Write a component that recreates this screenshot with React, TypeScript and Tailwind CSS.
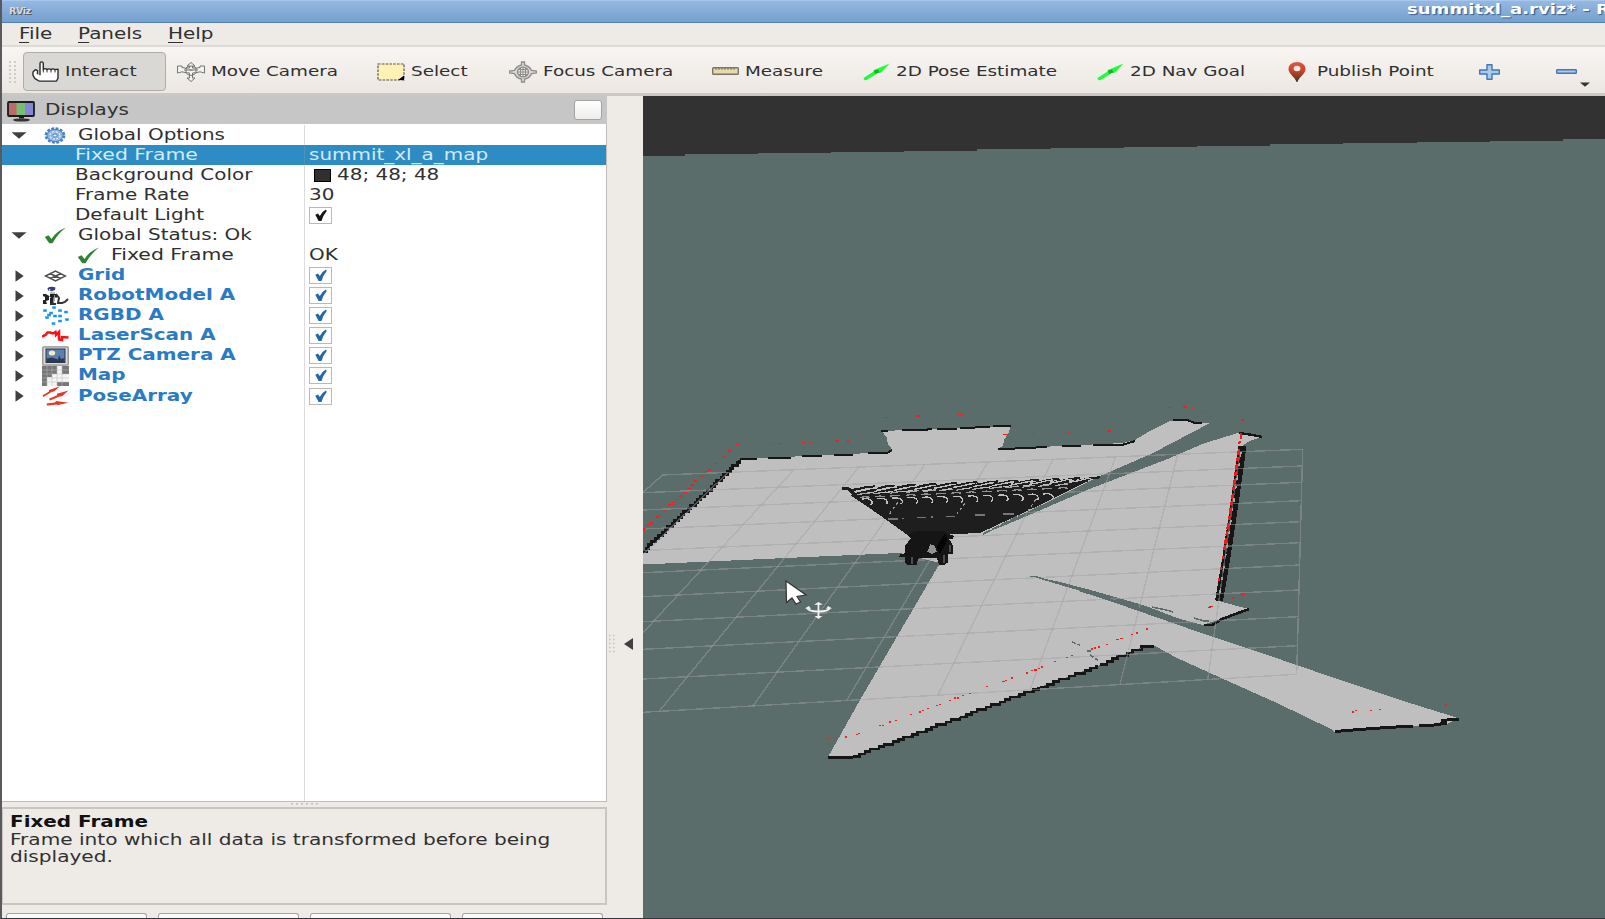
import React from "react";

type Kids = { children: React.ReactNode };

const Wide = ({ children, className = "", scale = "scale-x-[1.33]" }: Kids & { className?: string; scale?: string }) => (
  <span className={`inline-block origin-left whitespace-pre ${scale} ${className}`}>{children}</span>
);

/* ---------- toolbar icons ---------- */

const HandIcon = () => (
  <svg width="27" height="21" viewBox="0 0 27 22" preserveAspectRatio="none" fill="#fff" stroke="#2a2a2a" strokeWidth="1.400" strokeLinejoin="round">
    <path d="M8 15 V3 Q8 1 9.500 1 Q11.300 1 11.300 3 V9 Q13 7 15 9 Q17 7.500 19 9 Q21 7.500 23 9 L26 8.500 V18 L24.500 21 H7 L3 18.500 L1 15 V11.500 L3.500 9 L5.500 10 V14" />
    <path d="M11.300 9 V12 M15 9 V12 M19 9 V12 M23 9 V12" fill="none" strokeWidth="1" />
  </svg>
);

const MoveIcon = () => (
  <svg width="28" height="20" viewBox="0 0 28 20" fill="#f4f2f0" stroke="#757573" strokeWidth="1">
    <path d="M14 .5 L18 4 H15.500 V6 Q20 6.500 23 5.500 V4 L27.500 4 V11 L23 9.800 Q19 11 15.500 11 V16 H18 L14 19.500 L10 16 H12.500 V11 Q9 11 5 9.800 L.5 11 V4 H5 V5.500 Q8 6.500 12.500 6 V4 H10 Z" />
    <path d="M9 6 Q14 2 19 6 M8 10 Q14 17 20 10 M9 6 V10 M19 6 V10 M12.500 8 H15.500 M7 8 H21" fill="none" />
  </svg>
);

const SelectIcon = () => (
  <svg width="28" height="18" viewBox="0 0 28 18">
    <rect x="1" y="1" width="26" height="16" fill="#fff2b4" stroke="#555" strokeWidth="1.200" strokeDasharray="2.600 1.200" />
    <path d="M27 12.500 V17 H21 Z" fill="#000" />
  </svg>
);

const FocusIcon = () => (
  <svg width="28" height="22" viewBox="0 0 28 22" fill="none" stroke="#8c8c8a" strokeWidth="1.300">
    <path d="M12.500 1 H15.500 V4 Q21 5.500 22.500 9.500 L27.500 10 V12 L22.500 12.500 Q21 17 15.500 18 V21 H12.500 V18 Q7 17 5.500 12.500 L.5 12 V10 L5.500 9.500 Q7 5.500 12.500 4 Z" fill="#dcdbd9" />
    <ellipse cx="14" cy="11" rx="5.500" ry="4.800" fill="#eceae8" />
    <path d="M8 11 H20 M14 6 V16 M10 8.500 H18 M10 13.500 H18 M11.500 7 V15 M16.500 7 V15" strokeWidth="1" />
  </svg>
);

const RulerIcon = () => (
  <svg width="27" height="8" viewBox="0 0 27 8">
    <rect x=".7" y=".7" width="25.600" height="6.600" rx=".8" fill="#e4dca6" stroke="#77756e" strokeWidth="1.400" />
    <path d="M4 1 V3 M7 1 V3 M10 1 V3 M13 1 V3 M16 1 V3 M19 1 V3 M22 1 V3" stroke="#77756e" strokeWidth="1" />
  </svg>
);

const ArrowIcon = () => (
  <svg width="27" height="18" viewBox="0 0 27 18">
    <path d="M.5 15 L11 8.300 L11 7 L26.500 .5 L18 9.500 L15 10 L3.500 17 Q1 17.800 .5 15" fill="#1bff35" />
    <path d="M10.500 7.500 L15 6.500 L16.500 9.500 L12 10.800 Z" fill="#12b52a" />
  </svg>
);

const PinIcon = () => (
  <svg width="18" height="20" viewBox="0 0 18 20">
    <defs>
      <linearGradient id="pin" x1="0" y1="0" x2="0" y2="1">
        <stop offset="0" stopColor="#e2563f" />
        <stop offset=".45" stopColor="#c8432c" />
        <stop offset="1" stopColor="#3c3a1c" />
      </linearGradient>
    </defs>
    <path d="M9 0 C14 0 17.500 3 17.500 7 C17.500 12 11 15 9.500 20 H8.500 C7 15 .5 12 .5 7 C.5 3 4 0 9 0" fill="url(#pin)" />
    <ellipse cx="9" cy="6.500" rx="3.400" ry="2.700" fill="#f7e9e5" />
  </svg>
);

const PlusIcon = () => (
  <svg width="21" height="16" viewBox="0 0 21 16">
    <path d="M8 .7 H13 V6 H20.300 V10 H13 V15.300 H8 V10 H.7 V6 H8 Z" fill="#a9cbea" stroke="#4276b4" strokeWidth="1.400" strokeLinejoin="round" />
  </svg>
);

const MinusIcon = () => (
  <svg width="21" height="5" viewBox="0 0 21 5">
    <rect x=".7" y=".7" width="19.600" height="3.600" rx=".6" fill="#a9cbea" stroke="#4276b4" strokeWidth="1.400" />
  </svg>
);

/* ---------- tree icons ---------- */

const GearIcon = () => (
  <svg width="22" height="17" viewBox="0 0 22 17" fill="none">
    <ellipse cx="11" cy="8.500" rx="9.200" ry="7" stroke="#4a80c0" strokeWidth="2.400" strokeDasharray="2.800 1.500" />
    <ellipse cx="11" cy="8.500" rx="8" ry="6.200" fill="#8fb4de" stroke="#4a80c0" strokeWidth="1" />
    <ellipse cx="11" cy="8.500" rx="5" ry="3.800" stroke="#dce9f6" strokeWidth="1.400" strokeDasharray="2 1.500" />
    <ellipse cx="11" cy="8.500" rx="2" ry="1.500" fill="#eef5fc" stroke="#4a80c0" strokeWidth=".9" />
  </svg>
);

const CheckIcon = () => (
  <svg width="23" height="17" viewBox="0 0 23 17">
    <path d="M.8 10 L4.500 8.300 L7.500 12 Q12 4.500 22 .6 Q14 6.500 8.500 16.200 H5.300 Z" fill="#2a8530" />
  </svg>
);

const GridIcon = () => (
  <svg width="23" height="12" viewBox="0 0 23 12" fill="none" stroke="#505050" strokeWidth="1.500">
    <path d="M1.500 6 L11.500 1 L21.500 6 L11.500 11 Z M6 3.500 L17 8.700 M17 3.500 L6 8.700" />
  </svg>
);

const RobotIcon = () => (
  <svg width="27" height="20" viewBox="0 0 27 20">
    <path d="M5.500 2 Q9 0 13.500 1.500 L13 4 L9.500 5.200 L6 4.500 Z" fill="#3a3a86" />
    <path d="M7 3 L9 4 L7 5 Z" fill="#fff" />
    <path d="M8 6 H13 V8 H8 Z" fill="#bbb" />
    <path d="M1 8 H4 L7 10 V14 L4 15 L5 18 H1 V14 H3 V11 L1 10 Z M8 8 H15 V11.500 H11.500 V17 L13 19 H8 Z" fill="#222" />
    <path d="M14 8 L17 12 L16 17 H20 L23 16 L26 13 M8 17.500 L14 18" fill="none" stroke="#333" strokeWidth="2" />
    <path d="M6 9 L9 12 M12.500 9 V15" stroke="#999" strokeWidth="1" />
  </svg>
);

const CLOUD = [[12, 1.500], [3, 4.500], [9, 7], [18, 4.500], [24, 6], [7, 9], [5, 11.500], [13, 10], [18, 10], [18, 15], [25, 13.500], [11.500, 17.500]];
const CloudIcon = () => (
  <svg width="27" height="20" viewBox="0 0 27 20">
    {CLOUD.map(([x, y], i) => <rect key={i} x={x - 1.8} y={y - 1.2} width="3.600" height="2.500" fill="#1793f3" />)}
  </svg>
);

const ScanIcon = () => (
  <svg width="27" height="13" viewBox="0 0 27 13">
    <path d="M0 7.500 L3.500 6 L5.500 3.500 H8 L11 4.500 L13.500 3 L14 6 L17 3 V10.500 L20 11 V8 L26.500 8.500" fill="none" stroke="#fa1010" strokeWidth="2.500" />
  </svg>
);

const PhotoIcon = () => (
  <svg width="27" height="20" viewBox="0 0 27 20">
    <rect x=".8" y=".8" width="25.400" height="18.400" rx="1" fill="#d9d9d5" stroke="#8d8d89" strokeWidth="1.300" />
    <rect x="4" y="3" width="19" height="13.500" fill="#5f7fae" stroke="#29364f" strokeWidth="1" />
    <path d="M4.500 12.500 L10 11.500 L16 13.500 L17 9 L19 13 L22.500 12 V16 H4.500 Z" fill="#2b3a57" />
    <ellipse cx="10" cy="7" rx="3.200" ry="2.500" fill="#ecefbf" />
  </svg>
);

const MapIcon = () => (
  <svg width="27" height="20" viewBox="0 0 27 20">
    <rect width="27" height="20" fill="#f5f5f5" />
    <path d="M0 0 H15 V8 H10 V11 H5 V20 H0 Z M20 0 H27 V8 H20 Z M15 16 H27 V20 H15 Z" fill="#777" />
    <path d="M0 4 H27 M0 8 H27 M0 12 H27 M0 16 H27 M5 0 V20 M10 0 V20 M15 0 V20 M20 0 V20" stroke="#bbb" strokeWidth=".5" />
  </svg>
);

const PosesIcon = () => (
  <svg width="27" height="20" viewBox="0 0 27 20">
    <path d="M.5 9.500 L7 5.500 L7 4 L18 .3 L12 5.500 L9.500 6 L1.500 11 Z M7 12.700 L15 9.300 L15 7.800 L26.500 4.500 L20 10.300 L17.500 10.500 L8 14.500 Z M4.500 17.500 L13 16.500 L14 15 L26.500 16.800 L15 19.300 V18.500 L5 19.500 Z" fill="#ee3322" />
  </svg>
);

const MonitorIcon = () => (
  <svg width="28" height="21" viewBox="0 0 28 21">
    <rect x="1" y="1" width="26" height="14" rx="1" fill="#b66" stroke="#1c1c1c" strokeWidth="1.800" />
    <rect x="2" y="2" width="7.500" height="12" fill="#bd6a6a" />
    <rect x="9.500" y="2" width="9" height="12" fill="#76bd76" />
    <rect x="18.500" y="2" width="7.500" height="12" fill="#8686d2" />
    <path d="M12 15.500 H17 V17.500 H12 Z" fill="#1c1c1c" />
    <ellipse cx="14.500" cy="19" rx="8.500" ry="1.600" fill="#333" />
  </svg>
);

/* ---------- display tree ---------- */

type Value = { text?: string; swatch?: boolean; check?: "black" | "blue" };
type Row = {
  label: string;
  open?: boolean;
  closed?: boolean;
  icon?: React.ReactNode;
  level?: 1 | 2;
  plugin?: boolean;
  selected?: boolean;
  value?: Value;
};

const ROWS: Row[] = [
  { label: "Global Options", open: true, icon: <GearIcon /> },
  { label: "Fixed Frame", level: 1, selected: true, value: { text: "summit_xl_a_map" } },
  { label: "Background Color", level: 1, value: { text: "48; 48; 48", swatch: true } },
  { label: "Frame Rate", level: 1, value: { text: "30" } },
  { label: "Default Light", level: 1, value: { check: "black" } },
  { label: "Global Status: Ok", open: true, icon: <CheckIcon /> },
  { label: "Fixed Frame", level: 2, icon: <CheckIcon />, value: { text: "OK" } },
  { label: "Grid", closed: true, plugin: true, icon: <GridIcon />, value: { check: "blue" } },
  { label: "RobotModel A", closed: true, plugin: true, icon: <RobotIcon />, value: { check: "blue" } },
  { label: "RGBD A", closed: true, plugin: true, icon: <CloudIcon />, value: { check: "blue" } },
  { label: "LaserScan A", closed: true, plugin: true, icon: <ScanIcon />, value: { check: "blue" } },
  { label: "PTZ Camera A", closed: true, plugin: true, icon: <PhotoIcon />, value: { check: "blue" } },
  { label: "Map", closed: true, plugin: true, icon: <MapIcon />, value: { check: "blue" } },
  { label: "PoseArray", closed: true, plugin: true, icon: <PosesIcon />, value: { check: "blue" } },
];

const CheckBox = ({ color }: { color: "black" | "blue" }) => (
  <span className="flex h-[17px] w-[23px] items-center justify-center border border-[#bcb8b4] bg-white">
    <svg width="12" height="13" viewBox="0 0 12 13">
      <path d="M.3 5.800 L3 4.500 L4.800 7 Q7 2.500 11 .5 L11.700 2 Q8 6.500 6.500 12 H3.600 Z" fill={color === "black" ? "#141414" : "#2468a8"} />
    </svg>
  </span>
);

const TreeRow = ({ row }: { row: Row }) => (
  <div className={`flex h-[20.080px] shrink-0 items-center ${row.selected ? "bg-[#2d8cc4] text-[#d3eaf8]" : "text-[#303030]"}`}>
    <div className={`flex h-full w-[303px] shrink-0 items-center border-r ${row.selected ? "border-[#4f8fb8]" : "border-[#dcdcdc]"}`}>
      <span className="flex w-[36px] shrink-0 justify-center pr-[2px]">
        {row.open && <svg width="16" height="7" viewBox="0 0 16 7"><path d="M.5 .3 H15.500 L8 6.800 Z" fill="#404040" /></svg>}
        {row.closed && <svg width="9" height="12" viewBox="0 0 9 12"><path d="M.5 .3 L8.700 6 L.5 11.700 Z" fill="#404040" /></svg>}
      </span>
      {row.level === 1 && <span className="w-[37px] shrink-0" />}
      {row.level !== 1 && (
        <span className={`flex w-[34px] shrink-0 items-center justify-center ${row.level === 2 ? "ml-[33px]" : ""}`}>{row.icon}</span>
      )}
      <Wide
        scale={row.label === "Fixed Frame" ? "scale-x-[1.36]" : "scale-x-[1.33]"}
        className={row.plugin ? "ml-[6px] font-bold text-[#2a7ac4]" : row.level === 1 ? "ml-0" : "ml-[6px]"}
      >
        {row.label}
      </Wide>
    </div>
    <div className="flex items-center pl-[4px]">
      {row.value?.swatch && <span className="mr-[6px] ml-[5px] h-[13px] w-[17px] border border-black bg-[#303030]" />}
      {row.value?.text && <Wide>{row.value.text}</Wide>}
      {row.value?.check && <CheckBox color={row.value.check} />}
    </div>
  </div>
);

/* ---------- 3D scene ---------- */

const range = (n: number) => Array.from({ length: n }, (_, i) => i);

const ROW_LEFT = [475.8, 492.7, 510, 529, 550.5, 572.7, 596.7, 621.7, 649.3, 679, 712.3];
const ROW_RIGHT = [449.3, 466, 482.3, 500.7, 521.7, 542.7, 565, 590, 616.7, 645.7, 674.3];
const COL_TOP = [662.7, 728, 794, 859, 925, 988, 1053, 1115.7, 1177.7, 1240, 1302.7];
const COL_BOTTOM = [375, 470, 565, 659, 753, 846.7, 938, 1030, 1120, 1207.7, 1296.7];

const GridLines = () => (
  <g stroke="#a0a0a4" strokeOpacity=".45" strokeWidth="1.400">
    {ROW_LEFT.map((y, i) => (
      <line key={i} x1={i === 0 ? 662 : 643} y1={i === 0 ? 475 : y} x2={1302.7 - i * 0.6} y2={ROW_RIGHT[i]} />
    ))}
    {COL_TOP.map((x, i) => (
      <line key={i} x1={x} y1={475 - (x - 662.7) * 0.0402} x2={COL_BOTTOM[i]} y2={712.3 - (COL_BOTTOM[i] - 643) * 0.0581} />
    ))}
  </g>
);

type Pts = number[][];
const Dots = ({ ox, oy, pts }: { ox: number; oy: number; pts: Pts }) => (
  <g fill="#ee2020">
    {pts.map(([x, y, w = 3], i) => (
      <rect key={i} x={ox + x / 3 - w / 2} y={oy + y / 3 - 0.8} width={w} height="1.600" />
    ))}
  </g>
);

const SCAN_LEFT: Pts = [
  [737, 112, 4], [833, 108, 4], [960, 104, 5], [1096, 164, 5], [1176, 161], [293, 194], [393, 190, 2], [417, 190, 4], [489, 187], [514, 187, 2],
  [591, 183, 4], [624, 183, 2], [268, 213], [253, 230, 2], [228, 251], [208, 270, 3], [200, 274], [187, 290], [167, 303], [158, 315], [148, 325],
  [135, 337, 4], [122, 348], [112, 358, 2], [98, 368, 4], [96, 373, 4], [88, 375, 2], [72, 392], [57, 406], [53, 411], [35, 429, 3], [29, 433, 4], [22, 437, 4], [14, 445, 3], [12, 450, 2],
];
const SCAN_RIGHT: Pts = [
  [36, 131, 2], [66, 131, 2], [146, 127, 2], [268, 123, 4], [447, 52], [495, 51, 4], [517, 56, 2], [547, 64, 2], [668, 90],
  [638, 624, 2], [671, 612, 2], [665, 615, 2], [574, 649, 4], [569, 652, 3], [607, 634, 2], [382, 717, 2], [351, 729, 2], [337, 733, 2],
];
const SCAN_BOTTOM: Pts = [
  [563, 535, 2], [619, 531, 2], [650, 523, 2], [658, 520, 2], [719, 497, 2], [729, 497, 2], [749, 486, 2], [769, 482, 2], [814, 463, 2], [840, 456, 2],
  [850, 452, 2], [865, 445, 2], [890, 436, 2], [900, 433, 2], [930, 422, 2], [945, 414, 2], [955, 414, 2], [970, 407, 2], [991, 400, 2], [1040, 380, 2],
  [1091, 365, 3], [1098, 362, 2], [1116, 354, 2], [1161, 339, 2], [1176, 331, 2], [1187, 330, 3], [1198, 325, 2], [1206, 321, 2], [1246, 305, 2], [1282, 293, 2], [1297, 287, 2],
  [1355, 267, 2], [1366, 264, 2], [1377, 261, 2], [1402, 253, 2], [1432, 239, 3], [1443, 236, 3],
];
const SCAN_ARM: Pts = [[998, 456, 2], [1009, 452, 2], [1054, 451, 2], [1079, 449, 2], [1274, 437, 2], [1279, 434, 2]];

const FLOOR =
  "643,551 741,459 892,452 891,448 888,445 887,438 882,431 1011,426 1008,434 1004,440 1003,446 998,449 1123,443 1135,440 1150,431 1170,421 1187,420 1202,423.500 1210,423 1153,453 1098,477 981,535 1020,519 1087,490 1170,458 1205,443 1238,433 1262,437 1252,440 1243,445 1222,602 1249,609 1203,625 1180,619 1143,605 1087,589 1056,581 1032,576.500 1056,583 1087,593 1147,614 1207,635 1253,650 1343,681 1413,704 1458,718 1447,724 1335,732 1331,729 1277,703 1230,682 1177,658 1155,646 1146,646 1130,652 1100,665 1040,687 853,757 828,757 860,700 940,563 900,553 830,556 643,564.500";

/* small alternating offsets give map borders their blocky cell look */
const stepped = (x1: number, y1: number, x2: number, y2: number, n: number) =>
  `M${x1} ${y1} ` +
  range(n)
    .map((i) => {
      const jog = ((i * 7) % 5) * 0.12;
      return `H${(x1 + ((x2 - x1) * (i + 1 - jog)) / n).toFixed(1)} V${(y1 + ((y2 - y1) * (i + 1)) / n).toFixed(1)}`;
    })
    .join(" ");

const CloudWedge = () => (
  <g>
    <polygon points="850,495 868,507 888,521 909,536 980,533 1040,505 1070,490 1088,481 1060,484 880,493 862,493" fill="#1e1e1e" />
    <path d="M842 488.500 H848 L854 494 L862 498" stroke="#1e1e1e" strokeWidth="3.500" fill="none" />
    <g stroke="#1e1e1e" strokeWidth="2.200" fill="none">
      {range(12).map((i) => (
        <path key={i} d={`M${849 + i * 20.5} ${490.5 - i * 0.83} l9 -1.500 l8 -1.800 l9 -.8`} />
      ))}
      {range(12).map((i) => (
        <path key={i} d={`M${855 + i * 19.3} ${494 - i * 0.85} l9 -2 l12 -2`} />
      ))}
    </g>
    <g stroke="#c0c0c0" strokeWidth="1.300" fill="none">
      {range(12).map((i) => (
        <path key={i} d={`M${857 + i * 19.4} ${491.5 - i * 0.85} l8 -1.300 l8 -2 l5 -.5`} />
      ))}
      {range(13).map((i) => (
        <path key={i} d={`M${857 + i * 16.5} ${494.8 - i * 0.75} l6 -1.200 l7 -.8`} strokeOpacity=".85" />
      ))}
      {range(14).map((i) => (
        <path key={i} d={`M${860 + i * 15.2} ${497.5 - i * 0.7} l5 -.8 l5 .6`} strokeOpacity=".7" />
      ))}
      {range(13).map((i) => (
        <path key={i} d={`M${862 + i * 15.1} ${499 - i * 0.42} l5 -.3 q6 1 5 5 l-1.500 1`} />
      ))}
    </g>
    <path d="M888 519 h10 M902 518.500 h2 M917 517.500 h9 M931 517 h2 M946 516.500 h9 M975 515 h10 M1003 514 h11" stroke="#777" strokeWidth="1.200" />
    <path d="M898 502 L888 516 M965 503 L957 514 M1036 499 L1028 511" stroke="#999" strokeWidth="1.200" strokeDasharray="3 3" />
  </g>
);

const Robot = () => (
  <g transform="translate(820 400) scale(.3333)">
    <path d="M262 406 L285 392 H370 L385 402 L402 408 L398 416 L388 418 L398 435 V462 H384 L383 488 L372 495 H358 L350 475 H297 L290 486 V494 L262 496 L256 488 V472 L238 470 L240 464 L254 460 V440 L272 415 Z" fill="#151515" />
    <path d="M330 433 L345 438 L350 455 L336 462 L322 456 Z" fill="#929292" />
    <path d="M276 472 V492 M372 465 V488 M390 435 V455" stroke="#4d4d4d" strokeWidth="6" />
    <path d="M350 440 L375 400 L383 420 L360 462 Z" fill="#050505" />
  </g>
);

const Scene = () => (
  <svg className="block h-full w-full" viewBox="643 96 962 822" preserveAspectRatio="none" shapeRendering="crispEdges">
    <rect x="643" y="96" width="962" height="822" fill="#5b6d6a" />
    <path
      d={"M643 96 H1605 V139.300 " + range(14).map((i) => `H${1563 - i * 73.2} V${140.6 + i * 1.25}`).join(" ") + " H643 Z"}
      fill="#323232"
    />
    <polygon points={FLOOR} fill="#bfbfbf" />
    <g fill="none" stroke="#161616" strokeWidth="2">
      <path d={stepped(643, 551, 741, 459.5, 30)} strokeWidth="3" />
      <path d="M740 459 H757 M768 457.500 H791 M802 456 H822 M834 455 H853 M868 453.500 L887 453 L892 450" />
      <path d="M881 431 H888 M902 430 H923 L932 429 M937 428.500 H957 M960 428 L990 427 M993 426 H1011" />
      <path d="M998 448.500 H1015 L1047 447 M1062 446 H1081 M1093 445 H1122 L1135 441" />
      <path d="M1173 420 H1187 L1195 423 H1202" />
      <path d="M1239 433 L1253 435 L1262 437" strokeWidth="2.400" />
      <path d="M1242.500 446 L1235 500 L1226 560 L1219 601" strokeWidth="8" />
      <path d="M1204 625 H1212 L1222 619 L1249 609" strokeWidth="2.600" />
      <path d="M828 757.500 H853" strokeWidth="3" />
      <path d={stepped(853, 756.5, 960, 717, 16) + stepped(960, 717, 1040, 687, 12) + stepped(1040, 687, 1100, 665, 8) + stepped(1100, 664.5, 1142, 647, 6)} strokeWidth="2.600" />
      <path d="M1140 646.500 H1154" strokeWidth="2.600" />
      <path d="M1335 731.500 L1372 728.500 L1413 726 M1419 726 L1434 725 L1447 723 M1441 720.500 L1459 719" strokeWidth="3" />
    </g>
    <path d="M1241 452 L1234 500 L1225 560 L1219 598" stroke="#a8a8a8" strokeWidth="1.500" strokeDasharray="5 6 3 9" fill="none" />
    <GridLines />
    <g stroke="#5b6d6a" strokeWidth="1.500" fill="none">
      <path d="M1030 576.500 H1035 L1056 583 L1087 592 M1152 607 L1166 610 L1173 612 M1194 618 L1204 621 H1209" />
      <path d="M1072 642 L1080 645 M1087 651 H1091 M1090 655 L1099 661" strokeDasharray="4 2" />
      <path d="M1080 590 L1147 612" strokeWidth="2.600" />
      <path d="M983 534 L1020 515" strokeDasharray="8 2" />
    </g>
    <CloudWedge />
    <Dots ox={640} oy={380} pts={SCAN_LEFT} />
    <Dots ox={1020} oy={390} pts={SCAN_RIGHT} />
    <Dots ox={640} oy={560} pts={SCAN_BOTTOM} />
    <Dots ox={1020} oy={560} pts={SCAN_ARM} />
    <path d="M1241 433 V438 L1239 444 M1239 449 L1236 470 L1232 500 L1228 525 L1224 552" stroke="#f01c1c" strokeWidth="2.400" strokeDasharray="6 2 4 3" fill="none" />
    <path d="M1223 556 L1218 586" stroke="#f01c1c" strokeWidth="2" strokeDasharray="3 8" fill="none" />
    <Robot />
    <g shapeRendering="auto">
      <path d="M786 581 L806 595 L797 596.500 L800.500 602 L796 604 L792 598 L786.500 602.500 Z" fill="#fff" stroke="#333" strokeWidth="1.200" />
      <path d="M818.500 604 V617 M807 607.500 Q808 611.500 818.500 611.500 Q829 611.500 830 607.500" fill="none" stroke="#f2f2f2" strokeWidth="1.800" />
      <path d="M814 604.800 L818.500 602 L823 604.800 Z M814.500 616 L818.500 619 L822.500 616 Z M805 608.500 L809 606 L811 609 Z M832 608.500 L828 606 L826 609 Z" fill="#f2f2f2" />
    </g>
  </svg>
);

/* ---------- window ---------- */

const ToolItem = ({ icon, label, className }: { icon: React.ReactNode; label: string; className: string }) => (
  <div className={`flex shrink-0 items-center ${className}`}>
    <span className="flex w-[28px] shrink-0 justify-center">{icon}</span>
    <Wide className="ml-[6px]">{label}</Wide>
  </div>
);

const MenuItem = ({ label, className }: { label: string; className: string }) => (
  <div className={`shrink-0 ${className}`}>
    <Wide>
      <span className="underline decoration-1 underline-offset-[3px]">{label[0]}</span>
      {label.slice(1)}
    </Wide>
  </div>
);

export default function App() {
  return (
    <div className="flex h-[919px] w-[1605px] flex-col overflow-hidden border-b border-l-2 border-b-[#33363a] border-l-[#5a5a5c] bg-[#eeeae6] font-['DejaVu_Sans',sans-serif] text-[15px] leading-none text-[#303030]">
      <header className="flex h-[23px] shrink-0 items-center justify-between overflow-hidden border-t border-b border-t-[#a4c8ee] border-b-[#5580b8] bg-linear-to-b from-[#96b7e0] to-[#74a0d0]">
        <span className="ml-[7px] inline-block origin-left scale-x-[1.200] text-[8px] font-bold tracking-tighter text-[#dadada] [text-shadow:1px_1px_0_#555]">RViz</span>
        <span className="mb-[4px] w-[198px] shrink-0">
          <Wide scale="scale-x-[1.31]" className="text-[13.800px] font-bold text-white [text-shadow:1px_1px_1px_#3c5f8c]">summitxl_a.rviz* - RViz</Wide>
        </span>
      </header>

      <nav className="flex h-[24px] shrink-0 items-center border-b-2 border-[#dedbd7] pt-px pl-[16.500px]">
        <MenuItem label="File" className="w-[59.500px]" />
        <MenuItem label="Panels" className="w-[90px]" />
        <MenuItem label="Help" className="w-[60px]" />
      </nav>

      <div className="flex h-[49px] shrink-0 items-center border-b-[3px] border-[#cbc7c3] bg-linear-to-b from-[#f8f5f2] to-[#ece7e2] pt-[3px] text-[13.800px]">
        <svg className="ml-[6px] shrink-0" width="9" height="22" viewBox="0 0 9 22">
          {range(6).map((i) => <path key={i} d={`M1 ${1 + i * 4} h2 M6 ${1 + i * 4} h2`} stroke="#c4c0bb" strokeWidth="1.500" />)}
        </svg>
        <div className="ml-[6px] flex h-[39px] w-[143px] shrink-0 items-center rounded-[4px] border-[1.500px] border-[#b0ada9] bg-[#dad8d4] pl-[7px]">
          <ToolItem icon={<HandIcon />} label="Interact" className="w-[120px]" />
        </div>
        <ToolItem icon={<MoveIcon />} label="Move Camera" className="ml-[11px] w-[200px]" />
        <ToolItem icon={<SelectIcon />} label="Select" className="w-[132px]" />
        <ToolItem icon={<FocusIcon />} label="Focus Camera" className="w-[202px]" />
        <ToolItem icon={<RulerIcon />} label="Measure" className="w-[151px]" />
        <ToolItem icon={<ArrowIcon />} label="2D Pose Estimate" className="w-[234px]" />
        <ToolItem icon={<ArrowIcon />} label="2D Nav Goal" className="w-[187px]" />
        <ToolItem icon={<PinIcon />} label="Publish Point" className="w-[196px]" />
        <span className="w-[77px] shrink-0"><PlusIcon /></span>
        <span className="shrink-0"><MinusIcon /></span>
        <svg className="mt-[25px] ml-[3px] shrink-0" width="10" height="5" viewBox="0 0 10 5"><path d="M0 .5 H10 L5 4.800 Z" fill="#333" /></svg>
      </div>

      <main className="flex min-h-0 flex-1">
        <aside className="flex w-[605px] shrink-0 flex-col">
          <div className="flex h-[28px] shrink-0 items-center bg-[#c6c6c6] pr-[5px] pl-[5px]">
            <span className="mt-[3px]"><MonitorIcon /></span>
            <Wide className="ml-[10px]">Displays</Wide>
            <span className="ml-auto h-[20px] w-[28px] rounded-[3px] border border-[#a5a3a0] bg-linear-to-b from-white to-[#eeedeb]" />
          </div>
          <div className="flex h-[678px] shrink-0 flex-col border-r border-b border-[#c0bcb8] bg-white pt-px">
            {ROWS.map((row, i) => <TreeRow key={i} row={row} />)}
            <div className="w-[303px] flex-1 border-r border-[#dcdcdc]" />
          </div>
          <div className="flex h-[5px] shrink-0 items-center justify-center pb-px">
            <svg width="28" height="2" viewBox="0 0 28 2">{range(6).map((i) => <rect key={i} x={i * 5} y="0" width="2" height="1.500" fill="#c0bcb7" />)}</svg>
          </div>
          <div className="h-[98px] shrink-0 border-2 border-l border-[#c9c5c1] pt-[5px] pl-[7px] leading-[17.500px]">
            <div className="h-[17.500px]"><Wide className="font-bold text-[#111]">Fixed Frame</Wide></div>
            <div className="h-[17.500px]"><Wide scale="scale-x-[1.34]">Frame into which all data is transformed before being</Wide></div>
            <div className="h-[17.500px]"><Wide scale="scale-x-[1.34]">displayed.</Wide></div>
          </div>
          <div className="mt-[8px] flex shrink-0 gap-[11px] pl-[4px]">
            {range(4).map((i) => (
              <div key={i} className="h-[5px] w-[141px] rounded-t-[3px] border border-b-0 border-[#a9a5a1] bg-[#fbfaf9]" />
            ))}
          </div>
        </aside>
        <div className="flex w-[36px] shrink-0 items-center pt-[274px] pl-px">
          <svg width="30" height="20" viewBox="0 0 30 20">
            {range(5).map((i) => <path key={i} d={`M1 ${1.5 + i * 4} h1.500 M5 ${1.5 + i * 4} h1.500`} stroke="#c4c0bb" strokeWidth="1.500" />)}
            <path d="M25 4 V16 L16 10 Z" fill="#404040" />
          </svg>
        </div>
        <section className="min-w-0 flex-1"><Scene /></section>
      </main>
    </div>
  );
}
